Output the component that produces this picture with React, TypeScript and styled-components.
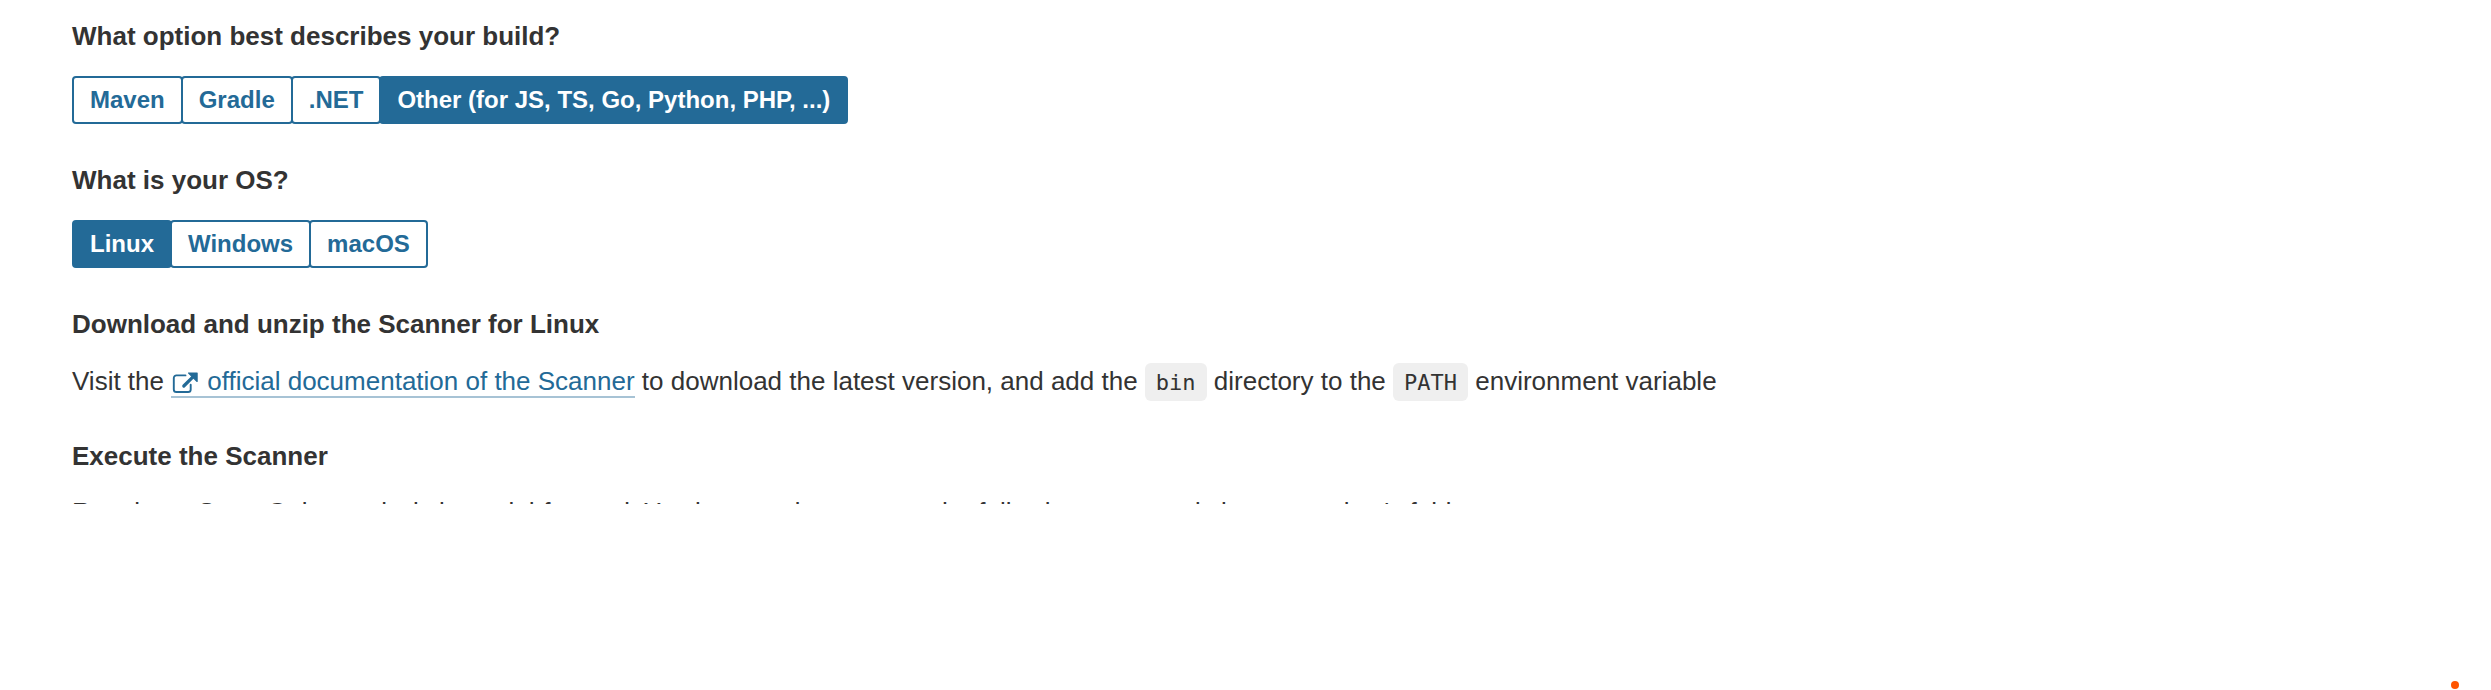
import React from 'react';
import styled, { createGlobalStyle } from 'styled-components';

const blue = '#236a97';

const GlobalStyle = createGlobalStyle`
  body {
    margin: 0;
    background: #fff;
    color: #333;
    font-family: Arial, 'Liberation Sans', sans-serif;
    font-size: 26px;
    line-height: 40px;
    overflow: hidden;
  }
`;

const Page = styled.main`
  position: relative;
  height: 690px;
`;

const Tutorial = styled.div`
  box-sizing: border-box;
  height: 504px;
  padding: 16px 72px 0;
  overflow: hidden;
`;

const Section = styled.section<{ $gap?: number }>`
  margin-bottom: ${({ $gap = 36 }) => $gap}px;
`;

const Heading = styled.h4`
  margin: 0;
  font-size: 26px;
  font-weight: 700;
  line-height: 40px;
`;

const ButtonGroup = styled.div`
  display: flex;
  margin-top: 20px;
`;

const Toggle = styled.button<{ $active?: boolean }>`
  box-sizing: border-box;
  height: 48px;
  margin: 0;
  padding: 0 16px;
  border: 2px solid ${blue};
  border-radius: 4px;
  background: ${({ $active }) => ($active ? blue : '#fff')};
  color: ${({ $active }) => ($active ? '#fff' : blue)};
  font: 700 24px/44px Arial, 'Liberation Sans', sans-serif;
  white-space: nowrap;

  & + & {
    margin-left: -2px;
  }
`;

const Paragraph = styled.p<{ $top?: number }>`
  margin: ${({ $top = 17 }) => $top}px 0 0;
  height: 40px;
  white-space: nowrap;
`;

const DocLink = styled.a`
  border-bottom: 2px solid #a7c3d5;
  color: ${blue};
  text-decoration: none;
`;

const LinkIcon = styled.svg`
  width: 28px;
  height: 28px;
  margin-right: 8px;
  vertical-align: -6px;
`;

const Code = styled.code`
  display: inline-block;
  height: 38px;
  padding: 0 11px;
  border-radius: 6px;
  background: #efefef;
  font: 22px/40px 'DejaVu Sans Mono', monospace;
  vertical-align: baseline;
`;

const Dot = styled.span`
  position: absolute;
  right: 32px;
  bottom: 1px;
  width: 8px;
  height: 8px;
  border-radius: 50%;
  background: #ff5500;
`;

function Choices({ options, selected }: { options: string[]; selected: string }) {
  return (
    <ButtonGroup>
      {options.map((o) => (
        <Toggle key={o} type="button" $active={o === selected}>
          {o}
        </Toggle>
      ))}
    </ButtonGroup>
  );
}

export default function App() {
  const other = 'Other (for JS, TS, Go, Python, PHP, ...)';
  return (
    <Page>
      <GlobalStyle />
      <Tutorial>
        <Section>
          <Heading>What option best describes your build?</Heading>
          <Choices options={['Maven', 'Gradle', '.NET', other]} selected={other} />
        </Section>
        <Section>
          <Heading>What is your OS?</Heading>
          <Choices options={['Linux', 'Windows', 'macOS']} selected="Linux" />
        </Section>
        <Section $gap={35}>
          <Heading>Download and unzip the Scanner for Linux</Heading>
          <Paragraph>
            Visit the{' '}
            <DocLink>
              <LinkIcon viewBox="0 0 28 28" fill="none">
                <path
                  d="M14.5 7.4H5.4a2.6 2.6 0 0 0-2.6 2.6v11.4a2.6 2.6 0 0 0 2.6 2.6h11.7a2.6 2.6 0 0 0 2.6-2.6v-4.6"
                  stroke={blue}
                  strokeWidth="1.9"
                  strokeLinecap="round"
                />
                <path d="M12.8 18L22 8.8" stroke={blue} strokeWidth="3.2" strokeLinecap="round" />
                <path d="M17.6 5H26.1V13.5Z" fill={blue} stroke={blue} strokeWidth="1.2" strokeLinejoin="round" />
              </LinkIcon>
              official documentation of the Scanner
            </DocLink>{' '}
            to download the latest version, and add the <Code>bin</Code> directory to the{' '}
            <Code>PATH</Code> environment variable
          </Paragraph>
        </Section>
        <Section>
          <Heading>Execute the Scanner</Heading>
          <Paragraph $top={16}>
            Running a SonarQube analysis is straighforward. You just need to execute the following
            commands in your project's folder.
          </Paragraph>
        </Section>
      </Tutorial>
      <Dot />
    </Page>
  );
}
